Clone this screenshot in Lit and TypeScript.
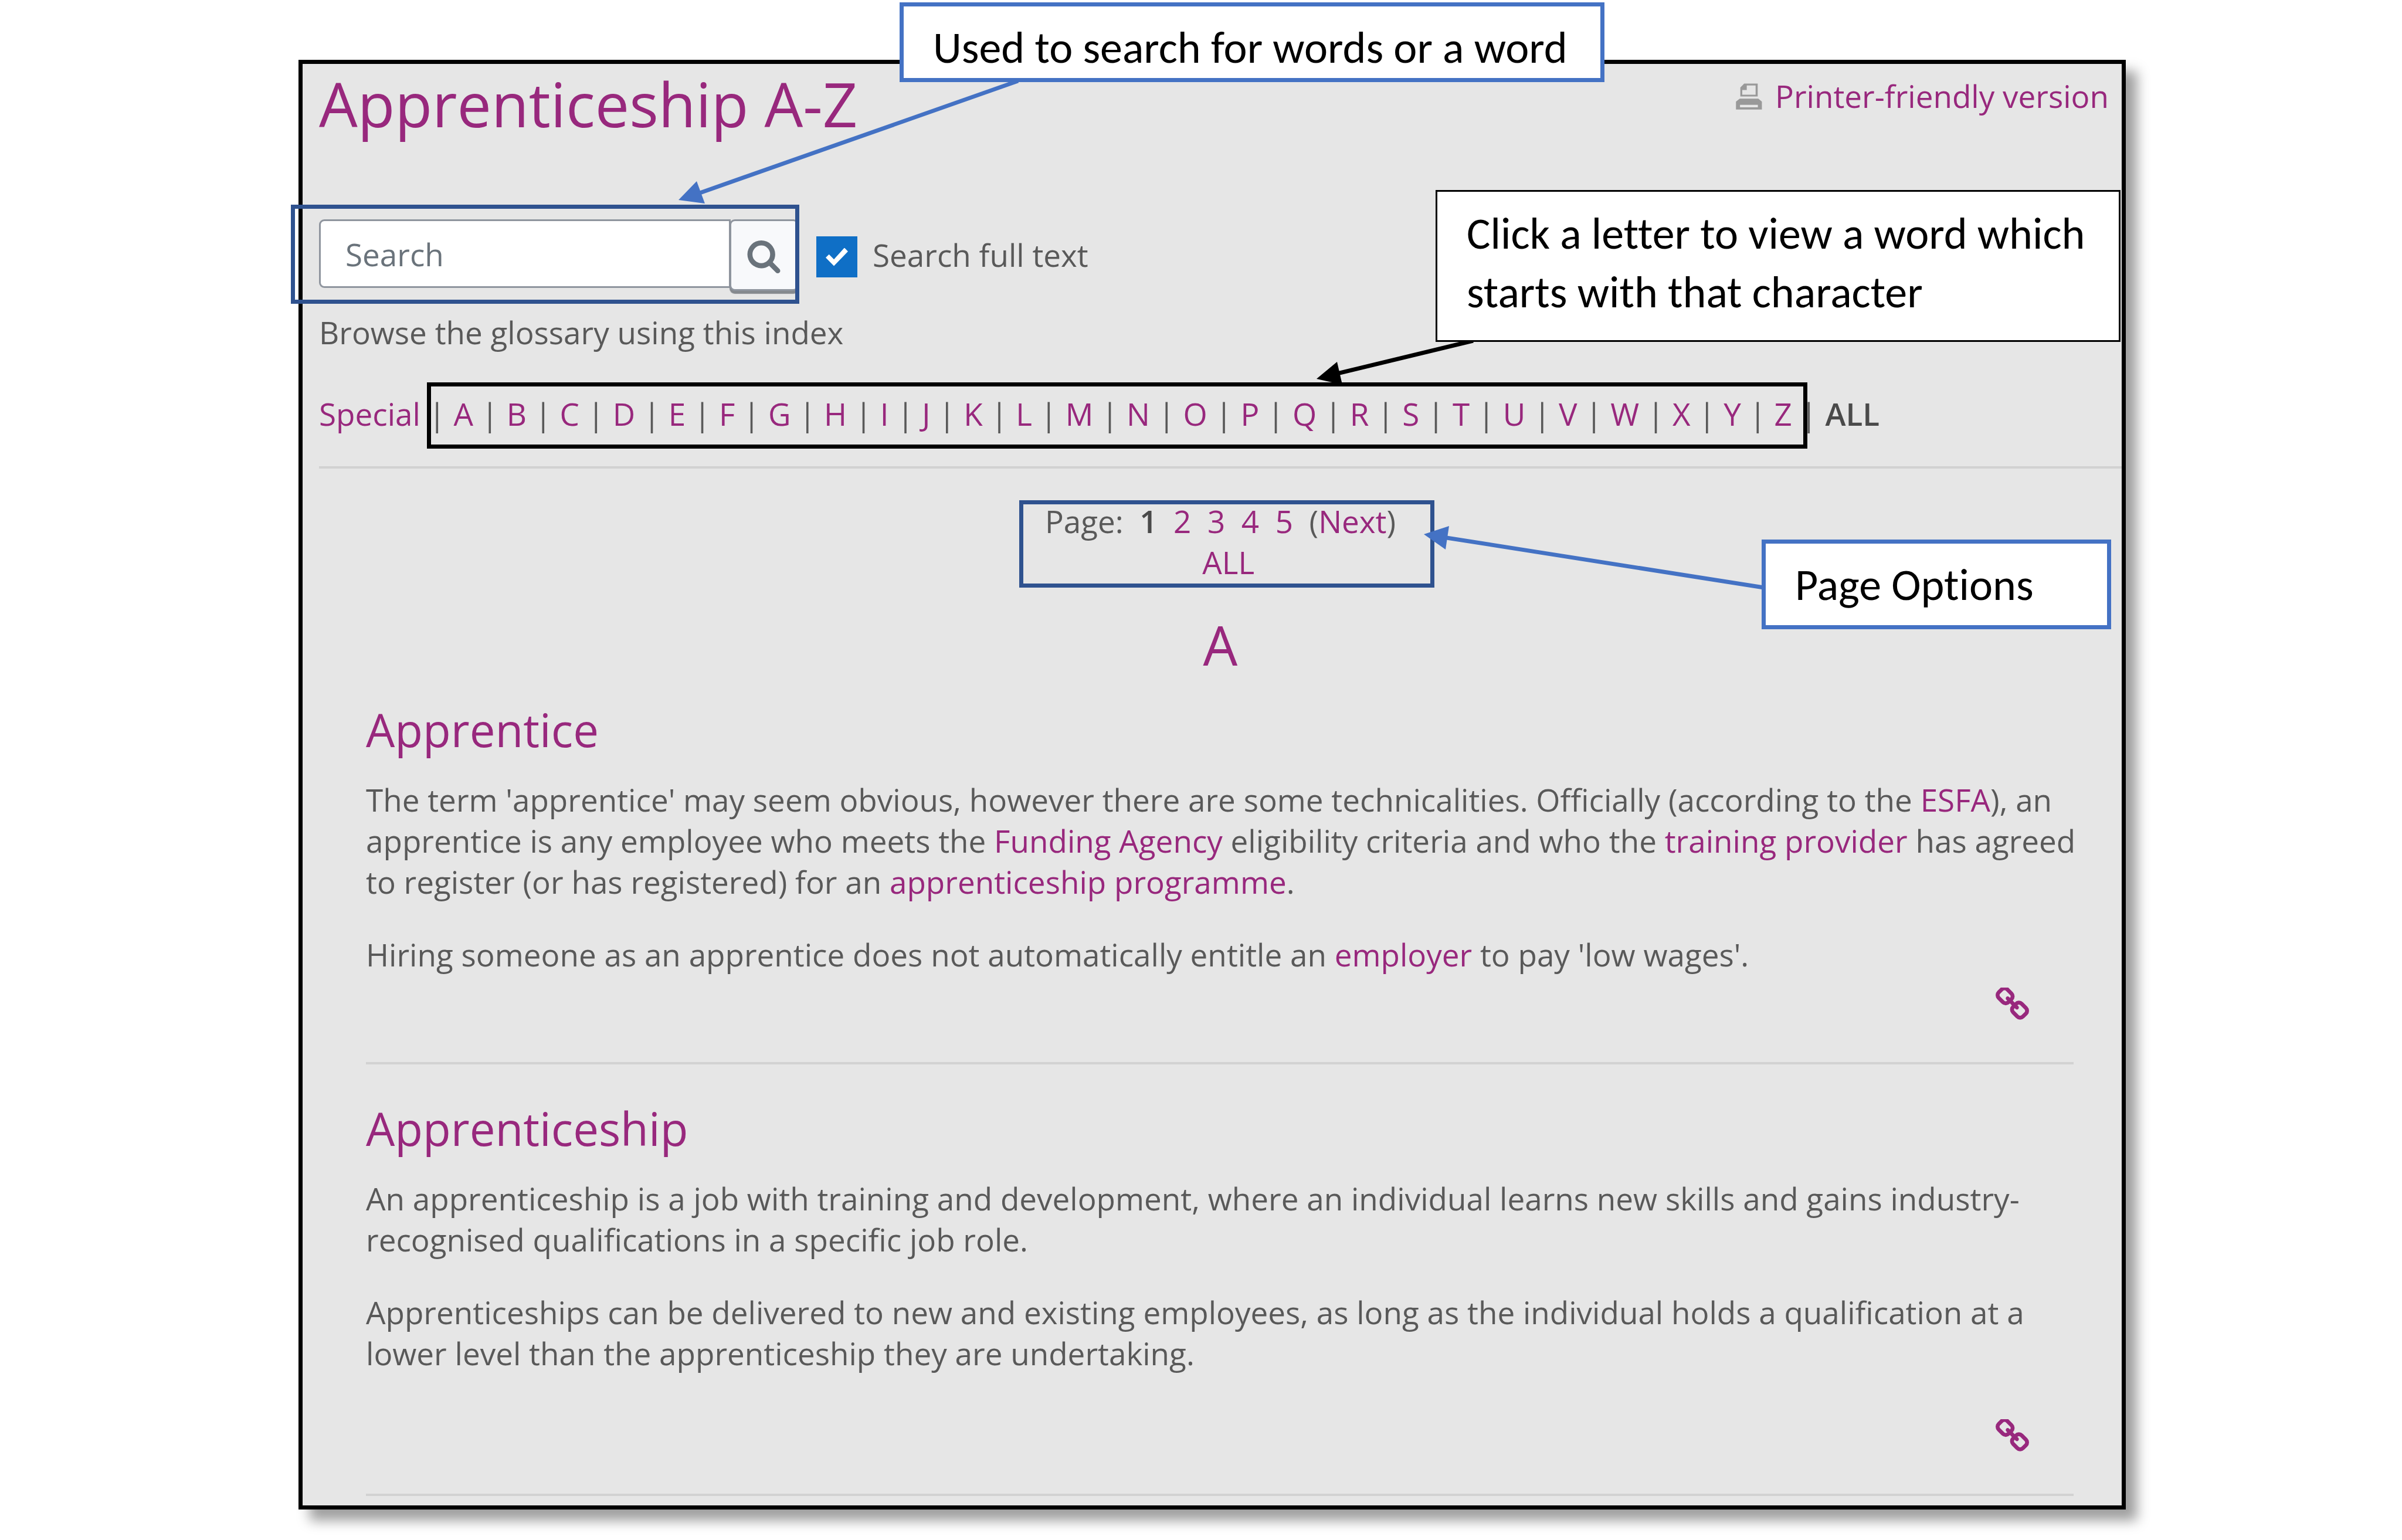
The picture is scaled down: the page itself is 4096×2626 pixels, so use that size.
import { LitElement, html, css, svg } from "lit";
import { customElement, state } from "lit/decorators.js";

const LETTERS = "ABCDEFGHIJKLMNOPQRSTUVWXYZ".split("");
const NB2 = "\u00a0\u00a0";

@customElement("glossary-entry")
export class GlossaryEntry extends LitElement {
  static styles = css`
    :host {
      display: flex;
      flex-direction: column;
      border-bottom: 4px solid #d2d2d2;
      padding-bottom: 70px;
    }
    .permalink {
      align-self: flex-end;
      display: block;
      width: 57px;
      height: 57px;
      margin: 21px 76px 0 0;
      color: #98287d;
    }
    :host([roomy]) .permalink {
      margin-top: 77px;
    }
    .icon {
      display: block;
      width: 100%;
      height: 100%;
    }
  `;

  render() {
    return html`
      <slot></slot>
      <a class="permalink" href="#entry" aria-label="Entry link">
        <svg class="icon" viewBox="80 80 1632 1632" fill="currentColor" aria-hidden="true">
          <path
            d="M1520 1216q0-40-28-68l-208-208q-28-28-68-28-42 0-72 32 3 3 19 18.500t21.500 21.500 15 19 13 25.500 3.500 27.500q0 40-28 68t-68 28q-15 0-27.500-3.500t-25.500-13-19-15-21.500-21.500-18.500-19q-33 31-33 73 0 40 28 68l206 207q27 27 68 27 40 0 68-26l147-146q28-28 28-67zm-703-705q0-40-28-68l-206-207q-28-28-68-28-39 0-68 27l-147 146q-28 28-28 67 0 40 28 68l208 208q27 27 68 27 42 0 72-31-3-3-19-18.500t-21.500-21.500-15-19-13-25.500-3.500-27.500q0-40 28-68t68-28q15 0 27.500 3.500t25.500 13 19 15 21.500 21.500 18.500 19q33-31 33-73zm895 705q0 120-85 203l-147 146q-83 83-203 83-121 0-204-85l-206-207q-83-83-83-203 0-123 88-209l-88-88q-86 88-208 88-120 0-204-84l-208-208q-84-84-84-204t85-203l147-146q83-83 203-83 121 0 204 85l206 207q83 83 83 203 0 123-88 209l88 88q86-88 208-88 120 0 204 84l208 208q84 84 84 204z"
          />
        </svg>
      </a>
    `;
  }
}

@customElement("app-root")
export class AppRoot extends LitElement {
  @state() private fullText = true;

  static styles = css`
    :host {
      display: block;
      position: relative;
      background: #fff;
      font-family: "Open Sans", "Noto Sans", sans-serif;
      font-size: 53px;
      line-height: 70px;
      color: #595959;
      --purple: #98287d;
    }
    * {
      box-sizing: border-box;
    }
    a {
      color: var(--purple);
      text-decoration: none;
    }
    h1,
    h2,
    h3,
    p {
      margin: 0;
      font-weight: 400;
    }
    h1,
    h2,
    h3 {
      color: var(--purple);
    }
    .page {
      padding: 102px 471px 53px 509px;
    }
    .panel {
      display: flex;
      flex-direction: column;
      border: 7px solid #000;
      background: #e6e6e6;
      padding: 5px 0 16px 28px;
      box-shadow: 19px 19px 20px rgba(0, 0, 0, 0.38);
    }
    .header {
      display: flex;
      justify-content: space-between;
      align-items: flex-start;
      padding-right: 22px;
    }
    .title {
      font-size: 104px;
      line-height: 126px;
    }
    .print {
      display: flex;
      align-items: center;
      gap: 22px;
      margin-top: 15px;
    }
    .print-icon {
      width: 45px;
      height: 45px;
    }
    .search {
      display: flex;
      align-items: flex-start;
      margin-top: 134px;
    }
    .field {
      width: 702px;
      height: 117px;
      border: 3px solid #8f959e;
      border-radius: 9px 0 0 9px;
      background: #fff;
      padding: 2px 42px 0;
      font: inherit;
      color: #6a737b;
    }
    .field::placeholder {
      color: #6a737b;
      opacity: 1;
    }
    .go {
      display: grid;
      place-items: center;
      width: 118px;
      height: 122px;
      margin-left: -2px;
      padding: 6px 2px 0 0;
      border: 3px solid #8f959e;
      border-radius: 9px;
      background: #f8f9fb;
      color: #6a737b;
      box-shadow: 0 5px 1px #85898e;
    }
    .go-icon {
      width: 57px;
      height: 56px;
    }
    .check {
      display: flex;
      align-items: center;
      gap: 26px;
      margin: 29px 0 0 30px;
    }
    .check-text {
      padding-bottom: 6px;
      line-height: 64px;
    }
    .box {
      appearance: none;
      width: 70px;
      height: 70px;
      margin: 0;
      display: grid;
      place-items: center;
      border: 0;
      background: #fff;
    }
    .box:checked {
      background: #0f6fc6;
    }
    .box:checked::before {
      content: "";
      width: 38px;
      height: 31px;
      background: #fff;
      clip-path: polygon(0 54%, 15% 36%, 37% 64%, 84% 0, 100% 20%, 37% 100%);
    }
    .browse {
      margin-top: 36px;
    }
    .index {
      margin-top: 69px;
    }
    .strong {
      font-weight: 600;
      color: #4a4a4a;
    }
    .rule {
      width: 100%;
      height: 4px;
      margin: 54px 0 0;
      border: 0;
      background: #d2d2d2;
    }
    .pager {
      margin-top: 55px;
      text-align: center;
    }
    .pager-row {
      display: block;
    }
    .letter {
      margin-top: 49px;
      font-size: 93px;
      line-height: 112px;
      text-align: center;
    }
    .entries {
      display: flex;
      flex-direction: column;
      gap: 63px;
      margin-top: 43px;
      padding: 0 82px 0 80px;
    }
    .term {
      font-size: 78px;
      line-height: 92px;
    }
    .text {
      margin: 39px -12px 0 0;
    }
    .text + .text {
      margin-top: 54px;
    }
    .overlay {
      position: absolute;
      inset: 0;
      width: 100%;
      height: 100%;
      pointer-events: none;
    }
    .frame {
      position: absolute;
      border: 7px solid #2f528f;
      pointer-events: none;
    }
    .frame-search {
      left: 496px;
      top: 349px;
      width: 867px;
      height: 169px;
    }
    .frame-index {
      left: 728px;
      top: 652px;
      width: 2354px;
      height: 113px;
      border-color: #000;
    }
    .frame-pager {
      left: 1738px;
      top: 853px;
      width: 708px;
      height: 149px;
    }
    .note {
      position: absolute;
      background: #fff;
      border: 7px solid #4472c4;
      color: #000;
      font-family: Calibri, Carlito, Lato, sans-serif;
      font-size: 76px;
      line-height: 100px;
      font-variant-ligatures: none;
    }
    .note-search {
      left: 1534px;
      top: 4px;
      width: 1202px;
      height: 136px;
      padding: 20px 0 0 50px;
    }
    .note-index {
      left: 2448px;
      top: 324px;
      width: 1168px;
      height: 259px;
      border: 3px solid #000;
      padding: 21px 0 0 50px;
    }
    .note-pager {
      left: 3004px;
      top: 920px;
      width: 596px;
      height: 153px;
      padding: 20px 0 0 50px;
    }
  `;

  private arrow(color: string, line: number[], head: string) {
    const [x1, y1, x2, y2] = line;
    return svg`
      <line x1=${x1} y1=${y1} x2=${x2} y2=${y2} stroke=${color} stroke-width="7" />
      <polygon points=${head} fill=${color} />
    `;
  }

  private toggle(e: Event) {
    this.fullText = (e.target as HTMLInputElement).checked;
  }

  render() {
    return html`
      <main class="page">
        <section class="panel">
          <header class="header">
            <h1 class="title">Apprenticeship A-Z</h1>
            <a class="print" href="#print">
              <svg class="print-icon" viewBox="50 70 164 164" aria-hidden="true">
                <path
                  fill="#999"
                  fill-rule="evenodd"
                  d="M102 72H186V152H78V96ZM118 84V112H90V141H173V84Z"
                />
                <path
                  fill="#999"
                  fill-rule="evenodd"
                  d="M74 166H190L212 184V233H51V184ZM76 204V219H187V204Z"
                />
              </svg>
              <span>Printer-friendly version</span>
            </a>
          </header>

          <form class="search" @submit=${(e: Event) => e.preventDefault()}>
            <input class="field" type="text" placeholder="Search" aria-label="Search" />
            <button class="go" type="submit" aria-label="Search">
              <svg class="go-icon" viewBox="64 128 1664 1664" fill="currentColor" aria-hidden="true">
                <path
                  d="M1216 832q0-185-131.500-316.500t-316.500-131.500-316.500 131.500-131.500 316.500 131.500 316.500 316.500 131.500 316.500-131.500 131.500-316.500zm512 832q0 52-38 90t-90 38q-54 0-90-38l-343-342q-179 124-399 124-143 0-273.500-55.500t-225-150-150-225-55.500-273.500 55.500-273.500 150-225 225-150 273.500-55.500 273.500 55.500 225 150 150 225 55.500 273.500q0 220-124 399l343 343q37 37 37 90z"
                />
              </svg>
            </button>
            <label class="check">
              <input class="box" type="checkbox" .checked=${this.fullText} @change=${this.toggle} />
              <span class="check-text">Search full text</span>
            </label>
          </form>

          <p class="browse">Browse the glossary using this index</p>
          <nav class="index">
            <a href="#special">Special</a> | ${LETTERS.map(
              (l) => html`<a href="#${l}">${l}</a> | `,
            )}<b class="strong">ALL</b>
          </nav>
          <hr class="rule" />

          <nav class="pager">
            <span class="pager-row"
              >Page: ${"\u00a0"}<b class="strong">1</b>${[2, 3, 4, 5].map(
                (n) => html`${NB2}<a href="#page${n}">${n}</a>`,
              )}${NB2}(<a href="#next">Next</a>)</span
            >
            <span class="pager-row">${NB2}<a href="#all">ALL</a></span>
          </nav>

          <h2 class="letter">A</h2>

          <div class="entries">
            <glossary-entry>
              <h3 class="term">Apprentice</h3>
              <p class="text">
                The term 'apprentice' may seem obvious, however there are some technicalities.
                Officially (according to the <a href="#esfa">ESFA</a>), an apprentice is any
                employee who meets the <a href="#agency">Funding Agency</a> eligibility criteria and
                who the <a href="#provider">training provider</a> has agreed to register (or has
                registered) for an <a href="#programme">apprenticeship programme</a>.
              </p>
              <p class="text">
                Hiring someone as an apprentice does not automatically entitle an
                <a href="#employer">employer</a> to pay 'low wages'.
              </p>
            </glossary-entry>
            <glossary-entry roomy>
              <h3 class="term">Apprenticeship</h3>
              <p class="text">
                An apprenticeship is a job with training and development, where an individual learns
                new skills and gains industry-recognised qualifications in a specific job role.
              </p>
              <p class="text">
                Apprenticeships can be delivered to new and existing employees, as long as the
                individual holds a qualification at a lower level than the apprenticeship they are
                undertaking.
              </p>
            </glossary-entry>
          </div>
        </section>
      </main>

      <div class="frame frame-search"></div>
      <div class="frame frame-pager"></div>
      <svg class="overlay" aria-hidden="true">
        ${this.arrow("#4472c4", [1736, 138, 1182, 333], "1157,341 1188,309 1202,347")}
        ${this.arrow("#000", [2512, 581, 2272, 639], "2245,646 2280,617 2289,656")}
        ${this.arrow("#4472c4", [3008, 1002, 2454, 915], "2428,911 2471,897 2465,937")}
      </svg>
      <div class="frame frame-index"></div>
      <div class="note note-search">Used to search for words or a word</div>
      <div class="note note-index">Click a letter to view a word which<br />starts with that character</div>
      <div class="note note-pager">Page Options</div>
    `;
  }
}
